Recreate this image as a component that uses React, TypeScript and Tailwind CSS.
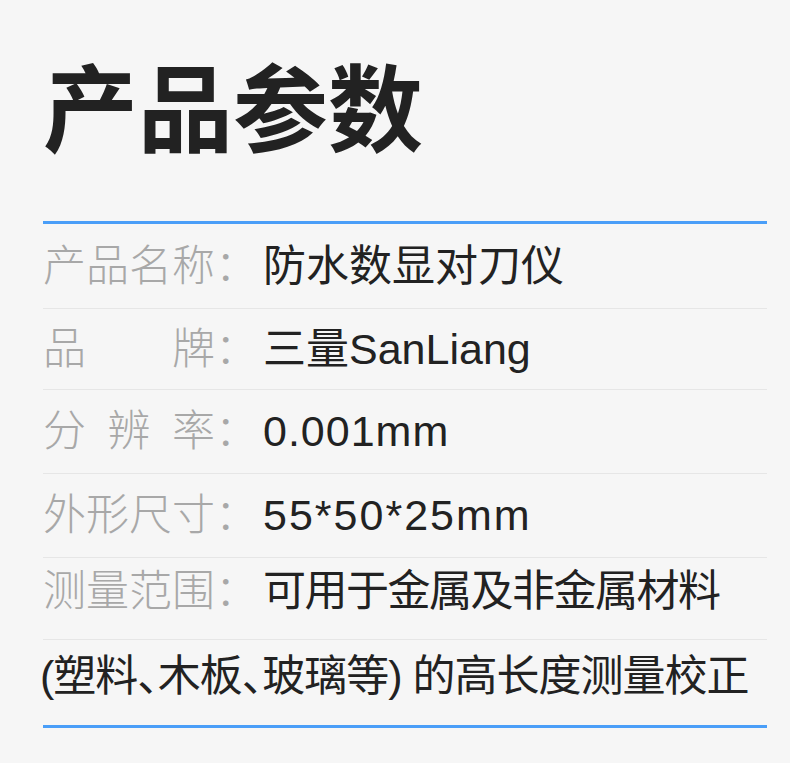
const cjk = "font-['Liberation_Sans','Noto_Sans_CJK_SC',sans-serif]";

const rows = [
  { label: ["产", "品", "名", "称"], value: "防水数显对刀仪", h: "h-[85px]", extra: "" },
  { label: ["品", "牌"], value: "三量SanLiang", h: "h-[81px]", extra: "" },
  { label: ["分", "辨", "率"], value: "0.001mm", h: "h-[84px]", extra: "tracking-[1px]" },
  { label: ["外", "形", "尺", "寸"], value: "55*50*25mm", h: "h-[84px]", extra: "tracking-[2px]" },
  { label: ["测", "量", "范", "围"], value: "可用于金属及非金属材料", h: "h-[82px] pb-[14px]", extra: "tracking-[-1.5px]" },
];

function SpecRow({ label, value, h, extra }: (typeof rows)[number]) {
  return (
    <div className={`flex items-center border-b border-[#e6e6e6] ${h}`}>
      <div className="flex w-[172px] justify-between text-[#a8a8a8] font-light">
        {label.map((c) => (
          <span key={c}>{c}</span>
        ))}
      </div>
      <span className="w-[48px] text-[#a8a8a8] font-light">：</span>
      <span className={`text-[#222] ${extra}`}>{value}</span>
    </div>
  );
}

export default function App() {
  return (
    <div className={`min-h-[763px] w-[790px] bg-[#f6f6f6] pl-[43px] pr-[23px] ${cjk}`}>
      <h1 className="pt-[56px] text-[95px] leading-none font-bold text-[#222] font-['Noto_Sans_CJK_SC',sans-serif]">
        产品参数
      </h1>
      <div className="mt-[70px] h-[3px] bg-[#4a9ef8]" />
      <div className="text-[43px] leading-none">
        {rows.map((r) => (
          <SpecRow key={r.value} {...r} />
        ))}
        <div className="-ml-[3px] flex h-[85px] items-center pb-[12px] text-[#222] tracking-[-1px] [font-feature-settings:'halt']">
          (塑料、木板、玻璃等) 的高长度测量校正
        </div>
      </div>
      <div className="h-[3px] bg-[#4a9ef8]" />
    </div>
  );
}
